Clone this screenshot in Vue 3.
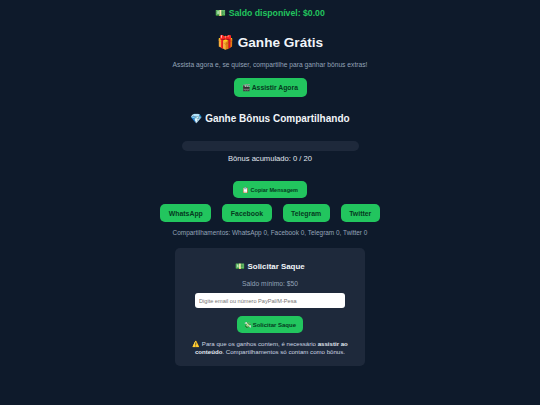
<script setup>
const shares = ['WhatsApp', 'Facebook', 'Telegram', 'Twitter']
</script>

<template>
  <main class="page">
    <p class="balance">💵 Saldo disponível: $0.00</p>
    <h1>🎁 Ganhe Grátis</h1>
    <p class="lead">Assista agora e, se quiser, compartilhe para ganhar bônus extras!</p>
    <button class="btn watch">🎬 Assistir Agora</button>
    <h2>💎 Ganhe Bônus Compartilhando</h2>
    <div class="bar"></div>
    <p class="accum">Bônus acumulado: 0 / 20</p>
    <button class="btn copy">📋 Copiar Mensagem</button>
    <div class="shares">
      <button v-for="s in shares" :key="s" class="btn share">{{ s }}</button>
    </div>
    <p class="counts">Compartilhamentos: WhatsApp 0, Facebook 0, Telegram 0, Twitter 0</p>
    <section class="card">
      <h3>💵 Solicitar Saque</h3>
      <p class="min">Saldo mínimo: $50</p>
      <input class="field" placeholder="Digite email ou número PayPal/M-Pesa" />
      <button class="btn withdraw">💸 Solicitar Saque</button>
      <p class="note">⚠️ Para que os ganhos contem, é necessário <b>assistir ao conteúdo</b>. Compartilhamentos só contam como bônus.</p>
    </section>
  </main>
</template>

<style scoped>
.page {
  width: 540px;
  height: 405px;
  box-sizing: border-box;
  background: #0e1a2b;
  color: #f1f5f9;
  font-family: "Liberation Sans", Arial, sans-serif;
  display: flex;
  flex-direction: column;
  align-items: center;
  padding-top: 8px;
  overflow: hidden;
}
p, h1, h2, h3 { margin: 0; }
.balance { font-size: 8.7px; font-weight: 700; color: #22c55e; line-height: 11px; }
h1 { font-size: 13.6px; line-height: 19px; margin-top: 14px; }
.lead { font-size: 6.7px; color: #94a3b8; line-height: 9px; margin-top: 8px; }
.btn {
  border: 0;
  background: #22c55e;
  color: #053b1e;
  font-family: inherit;
  font-weight: 700;
  padding: 0;
  display: block;
}
.watch { font-size: 6.8px; width: 73px; height: 19px; border-radius: 5px; margin-top: 9px; }
h2 { font-size: 10px; line-height: 13px; margin-top: 15px; }
.bar { width: 177px; height: 10px; border-radius: 5px; background: #1e293b; margin-top: 16px; }
.accum { font-size: 7.6px; line-height: 10px; margin-top: 3px; color: #e2e8f0; }
.copy { font-size: 5.5px; width: 74px; height: 17px; border-radius: 5px; margin-top: 17px; }
.shares { display: flex; gap: 11px; margin-top: 6px; }
.share { font-size: 6.9px; height: 18px; padding: 0 8.5px; border-radius: 5px; }
.counts { font-size: 6.45px; color: #94a3b8; line-height: 8px; margin-top: 7px; }
.card {
  width: 190px;
  height: 118px;
  box-sizing: border-box;
  margin-top: 11px;
  background: #1e293b;
  border-radius: 5px;
  display: flex;
  flex-direction: column;
  align-items: center;
  padding-top: 14px;
}
h3 { font-size: 7.9px; line-height: 10px; }
.min { font-size: 6.7px; color: #94a3b8; line-height: 8px; margin-top: 8px; }
.field {
  width: 150px;
  height: 15px;
  box-sizing: border-box;
  border: 0;
  border-radius: 3px;
  background: #fff;
  padding: 0 4px;
  font-size: 5.6px;
  font-family: inherit;
  margin-top: 5px;
}
.field::placeholder { color: #757575; }
.withdraw { font-size: 6px; width: 66px; height: 17px; border-radius: 5px; margin-top: 8px; }
.note { font-size: 6.1px; line-height: 8px; width: 160px; text-align: center; margin-top: 7px; color: #cbd5e1; }
.note b { color: #e2e8f0; }
</style>

<style>
html, body { margin: 0; background: #0e1a2b; }
</style>
